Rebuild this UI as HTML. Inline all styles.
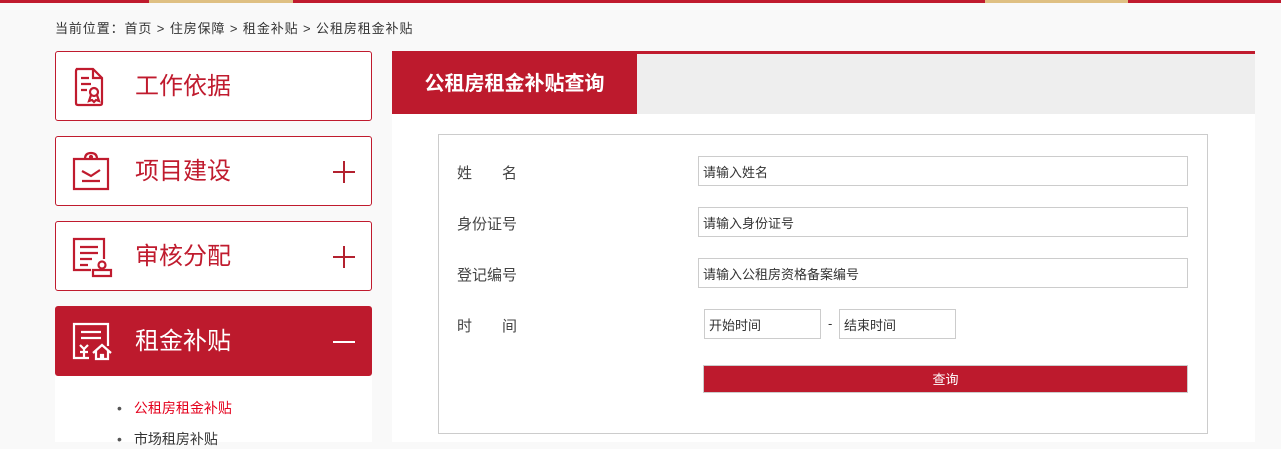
<!DOCTYPE html>
<html><head><meta charset="utf-8">
<style>
*{margin:0;padding:0;box-sizing:border-box}
body{width:1281px;height:442px;overflow:hidden;background:#f9f9f9;font-family:"Liberation Sans","Noto Sans CJK SC",sans-serif;position:relative;color:#333}
.a{position:absolute}
.bar{top:0;height:3px}
.crumb{left:55px;top:18px;font-size:13px;color:#333;letter-spacing:0.9px;white-space:nowrap}
.box{left:55px;width:317px;height:70px;border:1px solid #c01b2e;border-radius:3px;background:#fff}
.box .t{position:absolute;left:79px;top:19px;font-size:24px;color:#c01b2e;line-height:32px}
.box svg{position:absolute;left:15px;top:14px}
.plus{position:absolute;right:16px;top:24px;width:22px;height:22px}
.plus:before{content:"";position:absolute;left:0;top:10px;width:22px;height:2px;background:#b3212f}
.plus.p:after{content:"";position:absolute;left:10px;top:0;width:2px;height:22px;background:#b3212f}
.act{background:#bd1a2d}
.act .t{color:#fff}
.act .plus:before{background:#fff}
.lbl{left:457px;font-size:15px;color:#444}
.inp{border:1px solid #ccc;background:#fff;font-size:13px;color:#333;padding-left:4px;line-height:31px}
</style></head><body>
<div class="a bar" style="left:0;width:149px;background:#c01b2e"></div>
<div class="a bar" style="left:149px;width:144px;background:#dfc083"></div>
<div class="a bar" style="left:293px;width:692px;background:#c01b2e"></div>
<div class="a bar" style="left:985px;width:143px;background:#dfc083"></div>
<div class="a bar" style="left:1128px;width:153px;background:#c01b2e"></div>
<div class="a crumb">当前位置：首页 &gt; 住房保障 &gt; 租金补贴 &gt; 公租房租金补贴</div>

<div class="a" style="left:55px;top:376px;width:317px;height:66px;background:#fff"></div>
<div class="a box" style="top:51px"><svg width="40" height="42" viewBox="0 0 40 42" fill="none" stroke="#c01b2e" stroke-width="2.2"><path d="M5 3h17l9 9v25q0 2-2 2H7q-2 0-2-2V5q0-2 2-2z"/><path d="M22 3v9h9M10 12h8M10 18h10M10 24h6"/><circle cx="23" cy="26" r="4"/><path d="M20 29l-2 6 3-1 2 2 2-2 3 1-2-6"/></svg><div class="t">工作依据</div></div>
<div class="a box" style="top:136px"><svg width="40" height="42" viewBox="0 0 40 42" fill="none" stroke="#c01b2e" stroke-width="2.2"><path d="M3 8h34v30H3z"/><path d="M14 8q0-6 6-6t6 6"/><circle cx="20" cy="6" r="1"/><path d="M11 20l9 5 9-6M11 30h18"/></svg><div class="t">项目建设</div><div class="plus p"></div></div>
<div class="a box" style="top:221px"><svg width="42" height="42" viewBox="0 0 42 42" fill="none" stroke="#c01b2e" stroke-width="2.2"><path d="M20 34H3V3h30v20"/><path d="M9 11h18M9 17h18M9 23h12M9 29h8"/><circle cx="31" cy="29" r="3.5"/><path d="M22 40v-6h18v6z"/></svg><div class="t">审核分配</div><div class="plus p"></div></div>
<div class="a box act" style="top:306px"><svg width="42" height="42" viewBox="0 0 42 42" fill="none" stroke="#fff" stroke-width="2.2"><path d="M18 37H3V3h34v22"/><path d="M10 11h20M10 17h20"/><path d="M9 24l4 4 4-4M13 28v8M9 31h8"/><path d="M22 32l9-8 9 8M25 30v8h12v-8"/><path d="M30 38v-4h2v4"/></svg><div class="t">租金补贴</div><div class="plus"></div></div>
<div class="a" style="left:117px;top:398px;font-size:14px;color:#e4001c"><span style="color:#555;margin-right:12px">•</span>公租房租金补贴</div>
<div class="a" style="left:117px;top:429px;font-size:14px;color:#333"><span style="color:#555;margin-right:12px">•</span>市场租房补贴</div>

<div class="a" style="left:392px;top:51px;width:863px;height:391px;background:#fff"></div>
<div class="a" style="left:392px;top:51px;width:863px;height:3px;background:#c01b2e"></div>
<div class="a" style="left:637px;top:54px;width:618px;height:60px;background:#eee"></div>
<div class="a" style="left:392px;top:51px;width:245px;height:63px;background:#bd1a2d;color:#fff;font-size:20px;font-weight:bold;line-height:66px;text-align:center">公租房租金补贴查询</div>
<div class="a" style="left:438px;top:134px;width:770px;height:300px;border:1px solid #ccc"></div>
<div class="a lbl" style="top:162px">姓　　名</div>
<div class="a lbl" style="top:213px">身份证号</div>
<div class="a lbl" style="top:264px">登记编号</div>
<div class="a lbl" style="top:315px">时　　间</div>
<div class="a inp" style="left:698px;top:156px;width:490px;height:30px">请输入姓名</div>
<div class="a inp" style="left:698px;top:207px;width:490px;height:30px">请输入身份证号</div>
<div class="a inp" style="left:698px;top:258px;width:490px;height:30px">请输入公租房资格备案编号</div>
<div class="a inp" style="left:704px;top:309px;width:117px;height:30px">开始时间</div>
<div class="a" style="left:828px;top:316px;font-size:13px">-</div>
<div class="a inp" style="left:839px;top:309px;width:117px;height:30px">结束时间</div>
<div class="a" style="left:703px;top:365px;width:485px;height:28px;background:#bd1a2d;border:1px solid #ccc;color:#fff;font-size:13px;text-align:center;line-height:28px">查询</div>
</body></html>
